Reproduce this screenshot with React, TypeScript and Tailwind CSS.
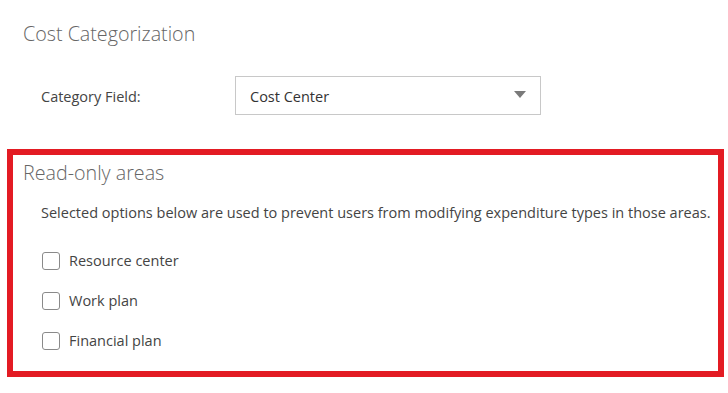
import React from "react";

const font = { fontFamily: '"Open Sans", "Noto Sans", sans-serif' };

function Check({ label }: { label: string }) {
  return (
    <label className="flex items-center h-[40px]">
      <span className="w-[18px] h-[18px] rounded-[3px] border-[1.5px] border-[#8a8a8a] bg-white shrink-0" />
      <span className="ml-[9px] text-[14.5px] text-[#444]">{label}</span>
    </label>
  );
}

export default function App() {
  return (
    <div className="w-[728px] h-[393px] bg-white relative overflow-hidden" style={font}>
      <div className="pl-[23px] pt-[19px] h-[29px] box-content text-[19.7px] [font-weight:350] leading-[29px] text-[#666]">
        Cost Categorization
      </div>
      <div className="flex items-center pl-[41px] mt-[28px] h-[39px]">
        <div className="w-[194px] mt-[3px] text-[14.5px] text-[#444]">Category Field:</div>
        <div className="w-[306px] h-[39px] border border-[#c8c8c8] flex items-center justify-between pl-[14px] pr-[14px]">
          <span className="mt-[3px] text-[14.5px] text-[#333]">Cost Center</span>
          <svg width="12" height="7" viewBox="0 0 12 7" className="-mt-[2px]">
            <path d="M0 0 L12 0 L6 7 Z" fill="#7a7a7a" />
          </svg>
        </div>
      </div>
      <div className="ml-[7px] w-[717px] mt-[34px] h-[228px] border-[6px] border-[#e31b23] pl-[10px]">
        <div className="pt-[3px] text-[19.7px] [font-weight:350] leading-[29px] text-[#666]">Read-only areas</div>
        <div className="pl-[18px] mt-[16px] text-[14.5px] leading-[20px] text-[#444] whitespace-nowrap">
          Selected options below are used to prevent users from modifying expenditure types in those areas.
        </div>
        <div className="pl-[19px] mt-[18px]">
          <Check label="Resource center" />
          <Check label="Work plan" />
          <Check label="Financial plan" />
        </div>
      </div>
    </div>
  );
}
